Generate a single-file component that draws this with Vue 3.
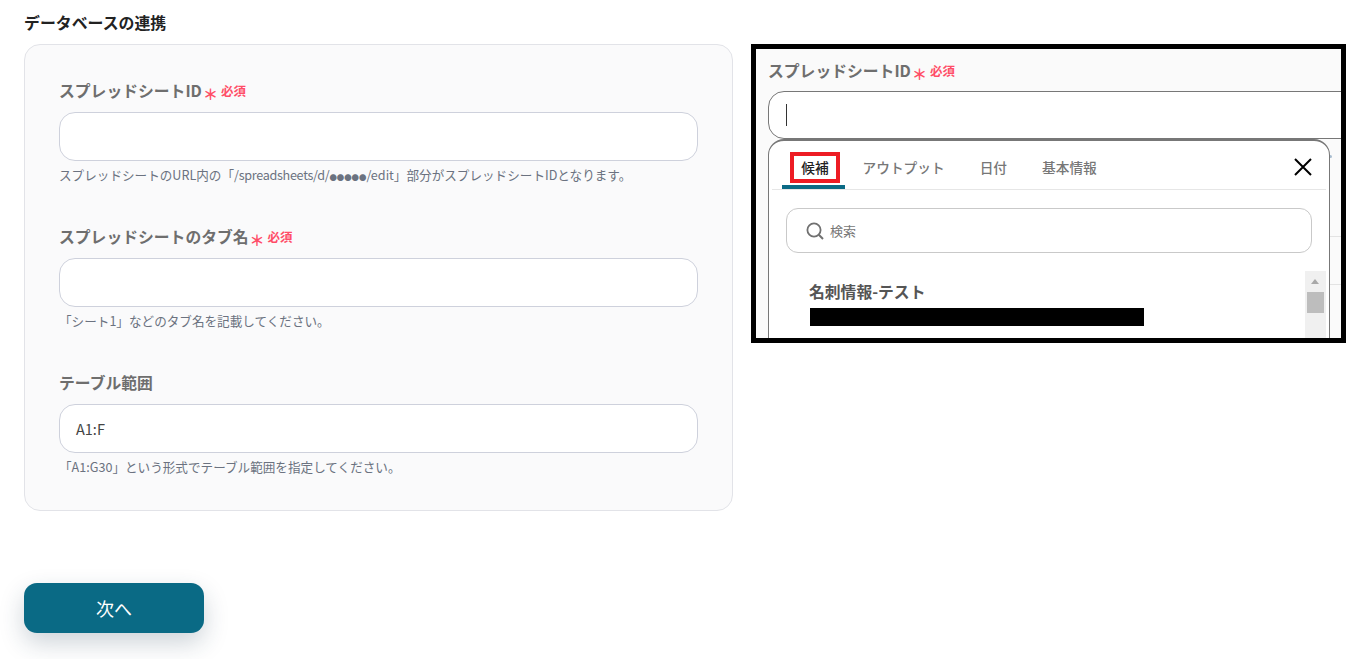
<script setup>
const fields = [
  { label: 'スプレッドシートID', required: true, value: '', help: 'スプレッドシートのURL内の「', path: '/spreadsheets/d/', dots: '●●●●●', rest: '/edit」部分がスプレッドシートIDとなります。' },
  { label: 'スプレッドシートのタブ名', required: true, value: '', help: '「シート1」などのタブ名を記載してください。' },
  { label: 'テーブル範囲', required: false, value: 'A1:F', help: '「A1:G30」という形式でテーブル範囲を指定してください。' },
]
const tabs = ['候補', 'アウトプット', '日付', '基本情報']
</script>

<template>
  <main class="page">
    <h2 class="heading">データベースの連携</h2>
    <div class="row">
      <section class="panel">
        <div v-for="f in fields" :key="f.label" class="field">
          <div class="label">
            <span>{{ f.label }}</span>
            <template v-if="f.required">
              <span class="star">＊</span><span class="req">必須</span>
            </template>
          </div>
          <div class="input"><span>{{ f.value }}</span></div>
          <p class="help">{{ f.help }}<span v-if="f.path" class="path">{{ f.path }}</span><span v-if="f.dots" class="dots">{{ f.dots }}</span>{{ f.rest }}</p>
        </div>
      </section>

      <figure class="shot">
        <div class="shot-inner">
          <div class="label shot-label">
            <span>スプレッドシートID</span><span class="star">＊</span><span class="req">必須</span>
          </div>
          <div class="shot-input"><i class="caret"></i></div>
          <div class="bg-row first"></div>
          <div class="bg-row second"></div>
          <span class="dot"></span>

          <div class="popup">
            <div class="tabs">
              <div v-for="(t, i) in tabs" :key="t" class="tab" :class="{ active: i === 0 }">
                <span>{{ t }}</span>
              </div>
              <svg class="close" viewBox="0 0 18 18" width="18" height="18" aria-hidden="true">
                <path d="M1 1 L17 17 M17 1 L1 17" stroke="#000" stroke-width="2" fill="none" />
              </svg>
            </div>
            <div class="search">
              <svg viewBox="0 0 20 20" width="20" height="20" aria-hidden="true">
                <circle cx="9" cy="9" r="6.6" stroke="#707070" stroke-width="1.8" fill="none" />
                <path d="M13.8 13.8 L18 18" stroke="#707070" stroke-width="2" fill="none" />
              </svg>
              <span>検索</span>
            </div>
            <div class="list">
              <div class="item">
                <div class="item-title">名刺情報-テスト</div>
                <div class="redact"></div>
              </div>
              <div class="scrollbar">
                <i class="arrow"></i>
                <i class="thumb"></i>
              </div>
            </div>
          </div>
        </div>
      </figure>
    </div>
    <button class="next" type="button">次へ</button>
  </main>
</template>

<style>
html, body { background: #fff; margin: 0; }
</style>

<style scoped>
.page {
  box-sizing: border-box;
  width: 1364px;
  height: 659px;
  overflow: hidden;
  padding: 12px 0 0 24px;
  font-family: "Noto Sans CJK JP", "Noto Sans", sans-serif;
  color: #333;
}
.heading {
  margin: -1px 0 9px;
  font-size: 15.9px;
  line-height: 24px;
  font-weight: 700;
  color: #222;
}
.row { display: flex; align-items: flex-start; }
.panel {
  box-sizing: border-box;
  width: 709px;
  height: 467px;
  padding: 33px 34px 0;
  background: #fafafb;
  border: 1px solid #e2e3e8;
  border-radius: 16px;
  display: flex;
  flex-direction: column;
  gap: 39px;
}
.label {
  display: flex;
  align-items: center;
  height: 24px;
  font-size: 15.8px;
  font-weight: 700;
  color: #6e6e6e;
}
.star {
  margin-left: 1px;
  width: 15px;
  font-size: 15px;
  font-weight: 700;
  line-height: 15px;
  text-align: center;
  color: #ff4d67;
  position: relative;
  top: 3px;
}
.req {
  margin-left: 3px;
  font-size: 12.5px;
  font-weight: 700;
  color: #ff4d67;
}
.input {
  box-sizing: border-box;
  margin-top: 10px;
  height: 49px;
  padding: 0 16px;
  display: flex;
  align-items: center;
  background: #fff;
  border: 1px solid #ced1dc;
  border-radius: 16px;
  font-size: 14.5px;
  color: #444;
}
.help {
  margin: 4px 0 0;
  font-size: 12.6px;
  line-height: 20px;
  color: #6b7280;
}
.path { letter-spacing: -0.3px; }
.dots { font-size: 7.4px; line-height: 1; }
.shot {
  margin: 0 0 0 18px;
  box-sizing: border-box;
  width: 595px;
  height: 299px;
  border: 5px solid #000;
  background: #fafafa;
  overflow: hidden;
}
.shot-inner {
  position: relative;
  height: 100%;
  padding: 9px 0 0 12px;
  box-sizing: border-box;
}
.shot-input {
  box-sizing: border-box;
  margin-top: 9px;
  width: 640px;
  height: 48px;
  display: flex;
  align-items: center;
  padding-left: 17px;
  background: #fff;
  border: 1px solid #777;
  border-radius: 16px;
}
.caret { width: 1px; height: 22px; background: #333; }
.bg-row { width: 640px; border-bottom: 1px solid #e3e3e3; }
.bg-row.first { height: 97px; }
.bg-row.second { height: 47px; }
.dot {
  position: absolute;
  left: 573px;
  top: 106px;
  width: 3px;
  height: 3px;
  border-radius: 50%;
  background: #a9bdd0;
}
.popup {
  position: absolute;
  left: 12px;
  top: 90px;
  box-sizing: border-box;
  width: 562px;
  height: 230px;
  background: #fff;
  border: 1px solid #777;
  border-top-width: 2px;
  border-radius: 16px 16px 0 0;
  padding: 0 3px 0 3px;
}
.tabs {
  position: relative;
  display: flex;
  align-items: flex-end;
  height: 48px;
  padding-left: 10px;
  border-bottom: 1px solid #e6e6e6;
}
.tab {
  position: relative;
  height: 40px;
  box-sizing: border-box;
  padding: 0 17.5px;
  font-size: 13.7px;
  font-weight: 500;
  line-height: 36px;
  color: #777;
}
.tab.active {
  padding: 0;
  width: 63px;
  text-align: center;
  color: #222;
  border-bottom: 4px solid #0a6a85;
  border-radius: 4px 4px 0 0;
}
.tab.active span {
  display: block;
  box-sizing: border-box;
  width: 50px;
  height: 31px;
  margin: 3px 0 0 8px;
  border: 4px solid #ed1c24;
  background: #fff;
  line-height: 23px;
}
.close { position: absolute; right: 14px; top: 17px; }
.search {
  box-sizing: border-box;
  margin: 18px 14px 0;
  height: 45px;
  width: 526px;
  padding-left: 18px;
  display: flex;
  align-items: center;
  gap: 5px;
  border: 1px solid #c9c9c9;
  border-radius: 12px;
  font-size: 13px;
  color: #777;
}
.list {
  position: relative;
  margin-top: 18px;
}
.item { padding: 9px 0 0 37px; }
.item-title {
  font-size: 15.8px;
  font-weight: 700;
  line-height: 24px;
  color: #555;
}
.redact {
  margin: 4px 0 0 1px;
  width: 334px;
  height: 18px;
  background: #000;
}
.scrollbar {
  position: absolute;
  right: 0;
  top: 0;
  width: 21px;
  height: 80px;
  background: #f0f0f0;
}
.arrow {
  position: absolute;
  left: 6px;
  top: 8px;
  border-left: 4.5px solid transparent;
  border-right: 4.5px solid transparent;
  border-bottom: 5px solid #a8a8a8;
}
.thumb {
  position: absolute;
  left: 2px;
  top: 21px;
  width: 17px;
  height: 21px;
  background: #bdbdbd;
}
.next {
  display: block;
  margin-top: 72px;
  width: 180px;
  height: 50px;
  border: 0;
  border-radius: 13px;
  background: #0a6a85;
  color: #fff;
  font-family: inherit;
  font-size: 18px;
  box-shadow: 0 10px 24px rgba(30, 60, 80, 0.22);
}
</style>
